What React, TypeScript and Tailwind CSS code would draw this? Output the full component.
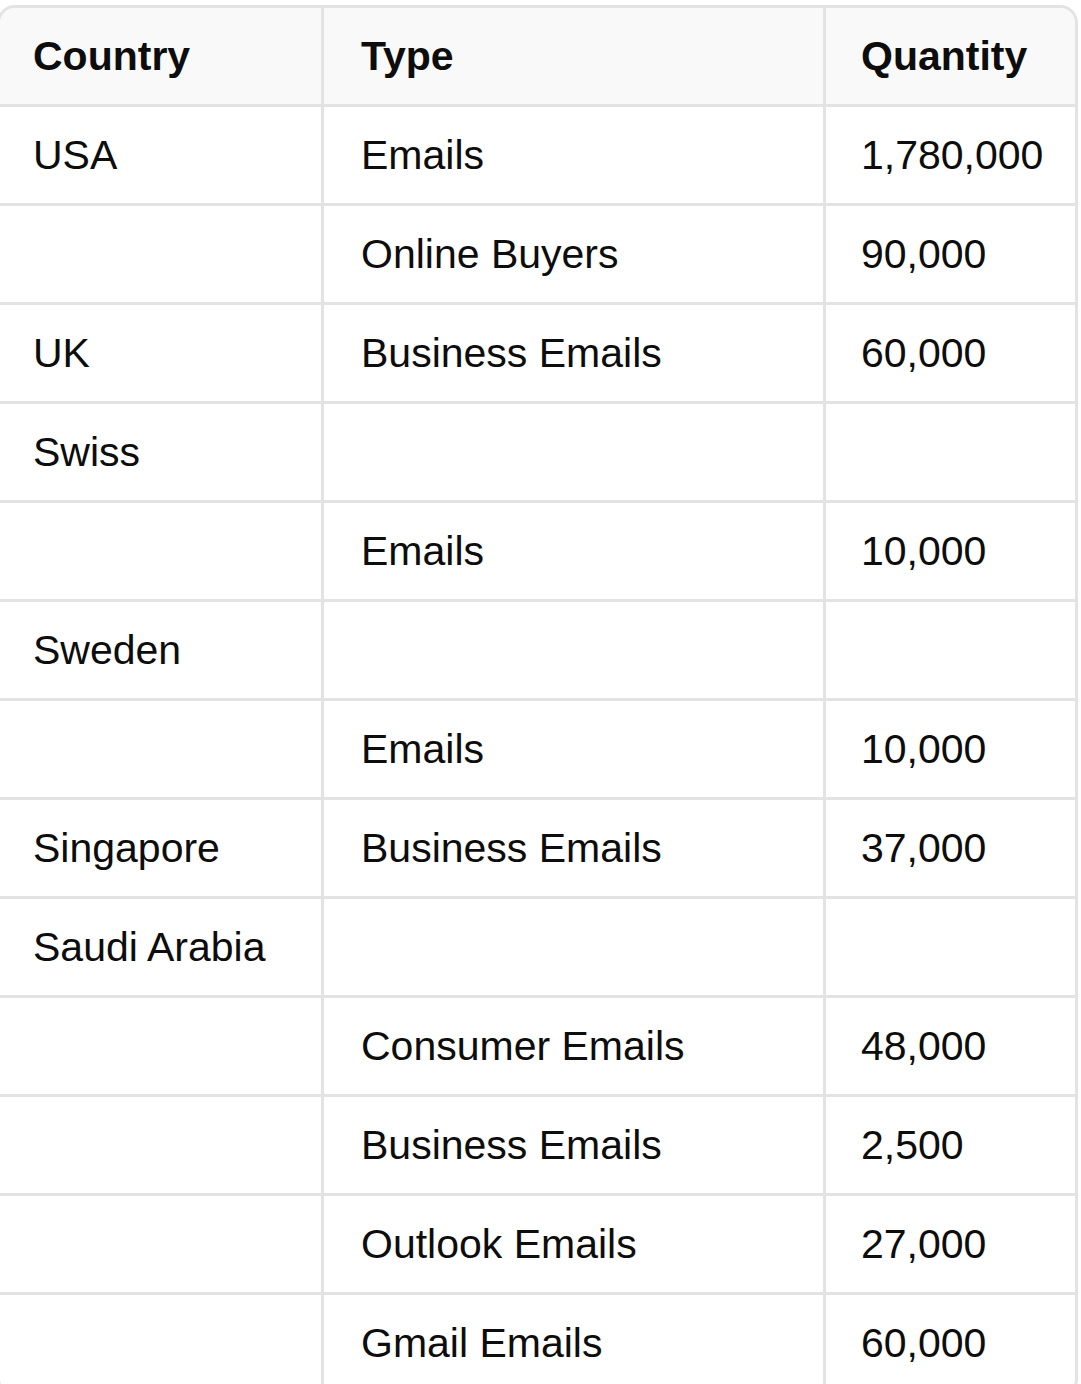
const rows: [string, string, string][] = [
  ['USA', 'Emails', '1,780,000'],
  ['', 'Online Buyers', '90,000'],
  ['UK', 'Business Emails', '60,000'],
  ['Swiss', '', ''],
  ['', 'Emails', '10,000'],
  ['Sweden', '', ''],
  ['', 'Emails', '10,000'],
  ['Singapore', 'Business Emails', '37,000'],
  ['Saudi Arabia', '', ''],
  ['', 'Consumer Emails', '48,000'],
  ['', 'Business Emails', '2,500'],
  ['', 'Outlook Emails', '27,000'],
  ['', 'Gmail Emails', '60,000'],
]

export default function App() {
  return (
    <div
      className="min-h-screen bg-white text-[#0d0d0d] overflow-hidden"
      style={{ fontFamily: '"Liberation Sans", Arial, sans-serif' }}
    >
      <div className="mt-[5px] -ml-[3px] w-[1081px] border-[3px] border-[#e3e3e3] rounded-[18px] overflow-hidden">
        <table className="w-full border-separate border-spacing-0 table-fixed text-[41px] leading-none">
          <colgroup>
            <col className="w-[324px]" />
            <col className="w-[502px]" />
            <col />
          </colgroup>
          <thead>
            <tr className="bg-[#f9f9f9]">
              <th className="h-[99px] pl-[33px] text-left font-bold border-b-[3px] border-r-[3px] border-[#e3e3e3]">
                Country
              </th>
              <th className="h-[99px] pl-[37px] text-left font-bold border-b-[3px] border-r-[3px] border-[#e3e3e3]">
                Type
              </th>
              <th className="h-[99px] pl-[35px] text-left font-bold border-b-[3px] border-[#e3e3e3]">
                Quantity
              </th>
            </tr>
          </thead>
          <tbody>
            {rows.map((r, i) => (
              <tr key={i}>
                <td className="h-[99px] pl-[33px] border-b-[3px] border-r-[3px] border-[#e3e3e3] whitespace-nowrap">
                  {r[0]}
                </td>
                <td className="h-[99px] pl-[37px] border-b-[3px] border-r-[3px] border-[#e3e3e3] whitespace-nowrap">
                  {r[1]}
                </td>
                <td className="h-[99px] pl-[35px] border-b-[3px] border-[#e3e3e3] whitespace-nowrap">
                  {r[2]}
                </td>
              </tr>
            ))}
          </tbody>
        </table>
      </div>
    </div>
  )
}
